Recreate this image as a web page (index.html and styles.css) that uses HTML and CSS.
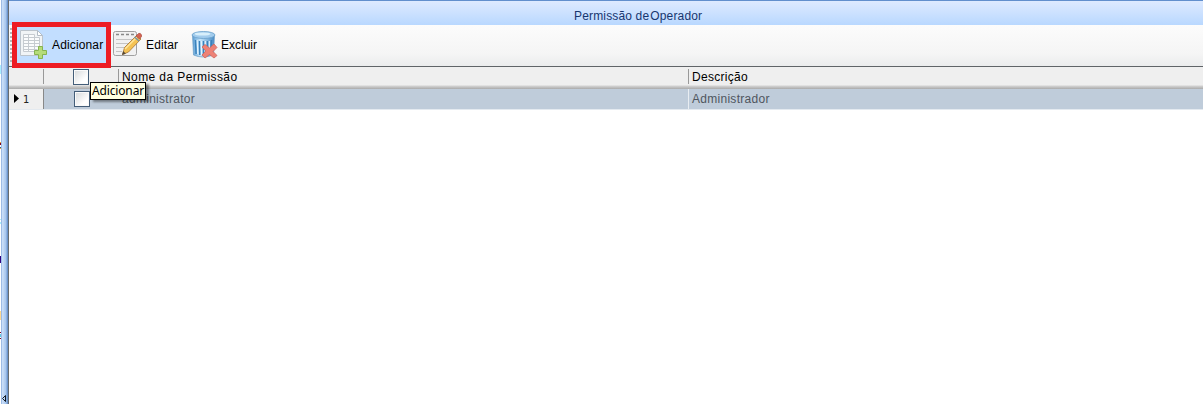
FILE: index.html
```html
<!DOCTYPE html>
<html lang="pt-BR">
<head>
<meta charset="utf-8">
<title>Permissão de Operador</title>
<link rel="stylesheet" href="styles.css">
</head>
<body>
<div class="app">
  <aside class="splitter">
    <svg width="9" height="404" viewBox="0 0 9 404" shape-rendering="crispEdges">
      <path fill="#a8f0ff" d="M0 65h1v9H0zM0 219h1v1H0zM0 222h1v2H0z"/>
      <path fill="#f0a030" d="M0 142h1v1H0zM0 148h1v1H0z"/>
      <path fill="#800020" d="M0 143h1v2H0zM0 332h1v1H0zM0 338h1v1H0z"/>
      <path fill="#2060a0" d="M0 147h1v1H0z"/>
      <path fill="#300080" d="M0 256h1v7H0z"/>
      <path fill="#ffd890" d="M0 311h1v9H0z"/>
      <path fill="#60c8e0" d="M0 334h1v3H0z"/>
      <path d="M5.500 395.500v6l-3-3z" fill="none" stroke="#101820" shape-rendering="auto"/>
    </svg>
  </aside>
  <main class="panel">
    <header class="title"><span class="title-text">Permissão de<span class="title-last">Operador</span></span></header>
    <nav class="toolbar">
      <span class="grip"></span>
      <button class="tool tool-add">
        <svg width="31" height="30" viewBox="0 0 31 30">
          <path d="M3.500 1.500h17l5 5v20h-22z" fill="#f1f4f6" stroke="#bcc4cc"/>
          <path d="M20.500 1.500v5h5z" fill="#fff" stroke="#b4bdc6"/>
          <path d="M6.500 5.500h11v3h5v14h-16z" fill="#fbfcfd"/>
          <path d="M6.500 5.500h11M6.500 8.500h16M6.500 11.500h16M6.500 14.500h16M6.500 17.500h16M6.500 20.500h14M6.500 22.500h12M6.500 5.500v17M11.500 5.500v17M17.500 5.500v17M22.500 8.500v9" fill="none" stroke="#c6cbd0"/>
          <path d="M21.500 17.500h4v4h4v4h-4v4h-4v-4h-4v-4h4z" fill="#b5dc79" stroke="#86b450"/>
        </svg>
        <span class="label-add">Adicionar</span>
      </button>
      <button class="tool tool-edit">
        <svg width="30" height="29" viewBox="0 0 30 29">
          <rect x="1.500" y="2.500" width="23" height="24" rx="2" fill="#f1f1f1" stroke="#a0a0a0"/>
          <path d="M4 5.500h18" stroke="#888" stroke-width="1.600" stroke-dasharray="3 2"/>
          <path d="M4 10.500h17M4 14.500h15M4 18.500h9M4 22.500h6" stroke="#c4c4c4"/>
          <path d="M10.500 25.500l2-7L25 6l4 4-12.500 13z" fill="#f4c253" stroke="#a77532" stroke-width=".8"/>
          <path d="M13 20L25 8" stroke="#ffe59a" stroke-width="1.500"/>
          <path d="M24 7l2.500-2.500q2-1 3 1.500v1.500L27.500 10z" fill="#d56451" stroke="#a84c43" stroke-width=".7"/>
          <path d="M22.500 8l4.500 4" stroke="#7794a4" stroke-width="1.500"/>
          <path d="M10 26l1.300-4 2.500 2.700z" fill="#564938"/>
        </svg>
        <span class="label-edit">Editar</span>
      </button>
      <button class="tool tool-delete">
        <svg width="27" height="29" viewBox="0 0 27 29">
          <defs>
            <linearGradient id="can"><stop stop-color="#5b9dd4"/><stop offset=".35" stop-color="#c6e6fb"/><stop offset="1" stop-color="#478ac4"/></linearGradient>
          </defs>
          <path d="M1.500 5l1 20q9 4 20 0l1-20z" fill="url(#can)" stroke="#6a9dc6" stroke-width=".7"/>
          <path d="M4.500 10l.6 14M8.500 11l.3 14M12.500 11v14M16.500 11v13M20.500 10l-.6 10" stroke="#3a82bc" stroke-width="1.500"/>
          <path d="M6.200 10l.6 14M10.300 11l.3 14M14.300 11v14M18.300 11v9" stroke="#e5f5ff" stroke-width="1.100"/>
          <ellipse cx="12.500" cy="5" rx="11.500" ry="3.500" fill="#a2cced" stroke="#689fca" stroke-width=".8"/>
          <ellipse cx="11.500" cy="4" rx="8" ry="1.600" fill="#d8effb"/>
          <path d="M11 17l3-2.500 4.500 3.500 4.500-4 3 3.500-4 4 4 4-3 2.500-4.500-3.500-4.500 3.500-3-3 4-4z" fill="#ed8276" stroke="#d0665c" stroke-width=".8"/>
        </svg>
        <span class="label-delete">Excluir</span>
      </button>
    </nav>
    <section class="grid">
      <div class="row head">
        <div class="cell index"></div>
        <div class="cell check"><span class="box"></span></div>
        <div class="cell name"><span class="txt-name">Nome da Permissão</span></div>
        <div class="cell desc"><span class="txt-desc">Descrição</span></div>
      </div>
      <div class="row item">
        <div class="cell index"><svg width="5" height="9" viewBox="0 0 5 9"><path d="M0 0l5 4.500L0 9z"/></svg><span>1</span></div>
        <div class="cell check"><span class="box"></span></div>
        <div class="cell name"><span class="txt-item">administrator</span></div>
        <div class="cell desc"><span class="txt-item-desc">Administrador</span></div>
      </div>
    </section>
  </main>
  <div class="tooltip">Adicionar</div>
</div>
</body>
</html>
```
FILE: styles.css
```css
* { box-sizing: border-box; }
body { margin: 0; background: #fff; overflow: hidden; font: 12px/16px "Liberation Sans", Arial, sans-serif; color: #000; }
svg { display: block; flex: none; }
span { white-space: nowrap; }
.app { position: relative; display: flex; width: 1203px; height: 404px; }
.splitter { flex: 0 0 9px; background: linear-gradient(90deg, #fff 0 1px, #9dbbe5 1px 2px, #c8ddf7 2px 3px, #bad3f3 4px, #a5c4ec 6px, #779fd5 7px, #6189c0 8px, #666b70 8px); }
.panel { flex: 1; min-width: 0; }
.title { height: 25px; display: flex; padding: 7px 0 0 565px; border-top: 1px solid #628fcd; background: linear-gradient(#deeaff, #b9d8ff); color: #17366f; }
.title-text { letter-spacing: .16px; }
.title-last { margin-left: 1px; }
.toolbar { height: 41px; display: flex; background: linear-gradient(#fcfcfc, #f5f5f5 70%, #ebeced); }
.grip { flex: 0 0 3px; height: 34px; margin-top: 3px; padding-left: 1px; background: repeating-linear-gradient(#b5b5b5 0 2px, #fafafa 2px 4px) content-box; }
.tool { display: flex; margin: 0; padding: 0; border: 0; background: none; font: inherit; text-align: left; flex: none; }
.tool span { padding-top: 12px; }
.tool-add { width: 99px; height: 46px; margin-top: -3px; border: 5px solid #ed1c24; background: #c2deff; gap: 4px; position: relative; z-index: 2; }
.tool-add svg { margin: 2px 0 0 0; }
.tool-add .label-add { padding-top: 10px; }
.tool-edit { margin-left: 1px; gap: 4px; }
.tool-edit svg { margin-top: 4px; }
.tool-delete { margin-left: 12px; gap: 4px; }
.tool-delete svg { margin-top: 5px; }
.label-add { letter-spacing: .14px; }
.label-edit { width: 33px; letter-spacing: .14px; }
.label-delete { letter-spacing: 0; }
.tool-delete { gap: 3px; }
.row { display: grid; grid-template-columns: 35px 75px 570px 1fr; }
.head { height: 23px; border-top: 1px solid #606468; background: linear-gradient(#efefef 0 18px, #d2d2d2 19px, #aaa 22px); }
.item { height: 21px; background: #bfccda; color: #4f565e; border-bottom: 1px solid #e4eaf0; }
.cell { display: flex; padding-left: 3px; }
.head .cell { border-right: 1px solid #999; height: 15px; margin-top: 2px; }
.item .cell { border-right: 1px solid #e8edf2; height: 20px; padding-top: 2px; }
.item .check, .head .desc, .item .desc { border-right: 0; }
.item .index { background: #efefef; border-right-color: #888; color: #222; gap: 4px; padding: 4px 0 0 5px; font: 11px/13px "DejaVu Sans Condensed", sans-serif; }
.index svg { margin-top: 1px; }
.cell.check { padding-left: 29px; }
.item .check { padding-left: 30px; }
.box { width: 16px; height: 16px; flex: none; border: 1px solid #435d78; background: linear-gradient(135deg, #d4d7d9, #fff 70%); box-shadow: inset 0 0 0 1px #fafafa; }
.txt-name { letter-spacing: .4px; }
.txt-desc { letter-spacing: .3px; }
.txt-item, .txt-item-desc { letter-spacing: .28px; }
.tooltip { position: absolute; z-index: 3; left: 90px; top: 82px; width: 56px; height: 18px; border: 1px solid #000; background: #ffffe1; padding-left: 1px; font: 12px/16px "Noto Sans", sans-serif; letter-spacing: -.15px; white-space: nowrap; box-shadow: 3px 2px 2px rgba(0,0,0,.4); }
```
